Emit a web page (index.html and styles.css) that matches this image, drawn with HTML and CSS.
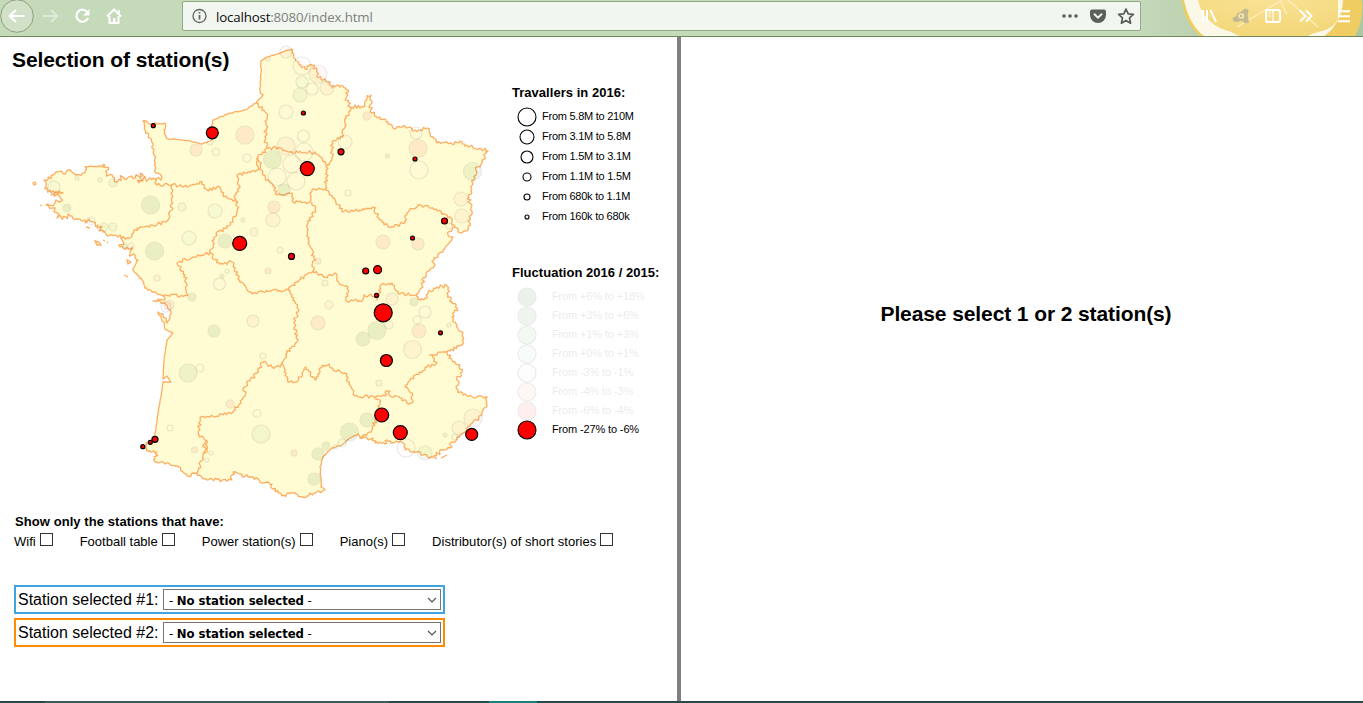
FILE: index.html
```html
<!DOCTYPE html>
<html lang="en">
<head>
<meta charset="utf-8">
<title>Stations</title>
<link rel="stylesheet" href="styles.css">
</head>
<body>
<header class="toolbar">
  <svg class="nav-icons" width="182" height="36" viewBox="0 0 182 36">
    <circle cx="17" cy="16" r="16.3" fill="#d0e1c7" stroke="#8d9f83"/>
    <path d="M24.500 16H10M16 10l-6.300 6 6.300 6" class="ic ic-thick"/>
    <path d="M43 16h14M51 10l6.300 6-6.300 6" class="ic ic-dim"/>
    <path d="M87.500 12.500A6 6 0 1 0 88 18" class="ic ic-thick"/>
    <path d="M89.500 9v6.500H83z" fill="#fff"/>
    <path d="M107 16.500L114 9.500l7 7M119 10v4" class="ic"/>
    <path d="M109.500 16v7h9v-7" class="ic"/>
    <path d="M113 18h2.500v5H113z" fill="#fff"/>
  </svg>
  <div class="urlbar">
    <svg width="16" height="16" viewBox="0 0 16 16"><circle cx="7.500" cy="8" r="6.500" fill="none" stroke="#5f635d" stroke-width="1.300"/><path d="M7.500 7v4.500M7.500 4v1.600" stroke="#5f635d" stroke-width="1.700"/></svg>
    <span class="url"><b>localhost</b>:8080/index.html</span>
    <svg class="url-actions" width="76" height="20" viewBox="0 0 76 20">
      <g fill="#5b5f59"><circle cx="5" cy="10" r="1.800"/><circle cx="11" cy="10" r="1.800"/><circle cx="17" cy="10" r="1.800"/>
      <path d="M33 3.500h12q2 0 2 2V9a8 8 0 0 1-16 0V5.500q0-2 2-2z"/></g>
      <path d="M35.500 8.200l3.500 3.400 3.500-3.400" fill="none" stroke="#f1f6f0" stroke-width="2" stroke-linecap="round"/>
      <path d="M67 3l2.200 4.800 5.200.5-3.900 3.600 1.100 5.300L67 14.500l-4.600 2.700 1.100-5.300-3.900-3.600 5.200-.5z" fill="none" stroke="#5b5f59" stroke-width="1.700" stroke-linejoin="round"/>
    </svg>
  </div>
  <svg class="theme" width="222" height="36" viewBox="1141 0 222 36">
    <defs>
      <linearGradient id="bg"><stop offset="0" stop-color="#c4d9b9"/><stop offset=".2" stop-color="#bdd3b2"/><stop offset="1" stop-color="#a9c8a4"/></linearGradient>
      <radialGradient id="pulp" cx=".5" cy="0" r=".9"><stop offset="0" stop-color="#f8e294"/><stop offset="1" stop-color="#f4d77a"/></radialGradient>
    </defs>
    <rect x="1141" width="222" height="36" fill="url(#bg)"/>
    <path d="M1182 0C1183 14 1190 28 1200 36H1355C1361 26 1363 12 1362 0z" fill="#f0cd62"/>
    <path d="M1184 0C1187 14 1193 28 1204 36H1324C1334 30 1343 15 1343 0z" fill="#fbf8e8"/>
    <path d="M1198 0C1200 12 1210 25 1225 30C1234 32 1237 36 1240 36H1308C1318 30 1332 32 1338 19L1338 0z" fill="url(#pulp)"/>
    <path d="M1282 0L1237 27M1280 0l7 14M1288 0l30 27" stroke="#fcf0c4" stroke-width="1.500" fill="none" opacity=".8"/>
    <path d="M1203 10v12M1207 10v12M1210.500 10l5.500 12" class="ic"/>
    <path d="M1241 12l4-3.500 3.500 1-1 6 1.500 7-3.500 1-4-3-4 1.500-4-.5-1-3.500 4-2 1-3z" fill="#c3b88f"/>
    <circle cx="1241" cy="16" r="2" fill="none" stroke="#f6e7b1" stroke-width="1.500"/><path d="M1243.500 13.500v5" stroke="#f6e7b1"/>
    <rect x="1266" y="10" width="14" height="12" rx="2" class="ic"/><path d="M1273 10v12M1268 13h3M1268 16h3" class="ic ic-thin"/>
    <path d="M1300 10.500l5.500 5.500-5.500 5.500M1306 10.500l5.500 5.500-5.500 5.500" class="ic"/>
    <path d="M1338 11.200h12M1338 16.200h12M1338 21.200h12" class="ic"/>
  </svg>
</header>

<main class="page">
  <section class="left">
    <div class="overview">
      <div class="map-box">
        <h1 class="title">Selection of station(s)</h1>
        <svg id="map" width="502" height="465" viewBox="0 37 502 465"></svg>
      </div>
      <aside class="legends">
        <h2 class="legend-title">Travallers in 2016:</h2>
        <ul class="legend sizes">
          <li><svg width="30" height="20"><circle cx="15" cy="11" r="9"/></svg>From 5.8M to 210M</li>
          <li><svg width="30" height="20"><circle cx="15" cy="11" r="7"/></svg>From 3.1M to 5.8M</li>
          <li><svg width="30" height="20"><circle cx="15" cy="11" r="6"/></svg>From 1.5M to 3.1M</li>
          <li><svg width="30" height="20"><circle cx="15" cy="11" r="4"/></svg>From 1.1M to 1.5M</li>
          <li><svg width="30" height="20"><circle cx="15" cy="11" r="3"/></svg>From 680k to 1.1M</li>
          <li><svg width="30" height="20"><circle cx="15" cy="11" r="2"/></svg>From 160k to 680k</li>
        </ul>
        <h2 class="legend-title">Fluctuation 2016 / 2015:</h2>
        <ul class="legend colors">
          <li class="dim"><svg width="40" height="19"><circle class="g1" cx="15" cy="11" r="9"/></svg>From +6% to +18%</li>
          <li class="dim"><svg width="40" height="19"><circle class="g2" cx="15" cy="11" r="9"/></svg>From +3% to +6%</li>
          <li class="dim"><svg width="40" height="19"><circle class="g3" cx="15" cy="11" r="9"/></svg>From +1% to +3%</li>
          <li class="dim"><svg width="40" height="19"><circle class="g4" cx="15" cy="11" r="9"/></svg>From +0% to +1%</li>
          <li class="dim"><svg width="40" height="19"><circle class="p0" cx="15" cy="11" r="9"/></svg>From -3% to -1%</li>
          <li class="dim"><svg width="40" height="19"><circle class="p1" cx="15" cy="11" r="9"/></svg>From -4% to -3%</li>
          <li class="dim"><svg width="40" height="19"><circle class="p2" cx="15" cy="11" r="9"/></svg>From -6% to -4%</li>
          <li><svg width="40" height="19"><circle class="red" cx="15" cy="11" r="9"/></svg>From -27% to -6%</li>
        </ul>
      </aside>
    </div>

    <h2 class="filter-title">Show only the stations that have:</h2>
    <div class="filters">
      <label>Wifi<input type="checkbox"></label>
      <label>Football table<input type="checkbox"></label>
      <label>Power station(s)<input type="checkbox"></label>
      <label>Piano(s)<input type="checkbox"></label>
      <label class="wide">Distributor(s) of short stories<input type="checkbox"></label>
    </div>

    <div class="pickers">
      <div class="picker blue"><span class="picker-label">Station selected #1:</span>
        <div class="select"><span>- <b>No station selected</b> -</span><svg width="10" height="6"><path d="M1 1l4 4 4-4" fill="none" stroke="#555" stroke-width="1.200"/></svg></div></div>
      <div class="picker orange"><span class="picker-label">Station selected #2:</span>
        <div class="select"><span>- <b>No station selected</b> -</span><svg width="10" height="6"><path d="M1 1l4 4 4-4" fill="none" stroke="#555" stroke-width="1.200"/></svg></div></div>
    </div>
  </section>
  <section class="right"><p class="prompt">Please select 1 or 2 station(s)</p></section>
</main>
<footer class="taskbar"><i class="tb-a"></i><i class="tb-b"></i><i class="tb-c"></i><i class="tb-d"></i></footer>
<script src="map.js"></script>
</body>
</html>
```

FILE: styles.css
```css
* { box-sizing: border-box; }
html, body { height: 100%; }
body { margin: 0; display: flex; flex-direction: column; overflow: hidden; background: #fff; color: #000; font-family: "Liberation Sans", Arial, sans-serif; }
h1, h2, p, ul { margin: 0; padding: 0; }
svg { display: block; flex: none; }

.toolbar { display: flex; height: 37px; flex: none; background: #c5dab9; border-bottom: 1px solid #71885f; }
.ic { fill: none; stroke: #fff; stroke-width: 2; }
.ic-thick { stroke-width: 2.2; }
.ic-thin { stroke-width: 1.2; }
.ic-dim { stroke-width: 2; opacity: .45; }
.urlbar { display: flex; align-items: center; width: 959px; height: 30px; margin-top: 1px; padding: 0 5px 0 9px; background: #f1f6f0; border: 1px solid #93a888; border-radius: 2px; }
.url { margin-left: 8px; padding-top: 1px; font: 13.3px "Open Sans", sans-serif; color: #7d817b; letter-spacing: -.16px; }
.url b { font-weight: 400; color: #0c0c0d; }
.url-actions { margin-left: auto; }

.page { display: flex; flex: 1; min-height: 0; }
.left { width: 681px; flex: none; border-right: 4px solid #808080; }
.right { flex: 1; padding: 265px 0 0 8px; text-align: center; }
.prompt { font-size: 21px; line-height: 24px; font-weight: 700; letter-spacing: -.1px; }

.overview { display: flex; height: 474px; }
.map-box { position: relative; width: 512px; }
.title { position: absolute; left: 12px; top: 11px; font-size: 21px; line-height: 24px; letter-spacing: -.09px; }
.legend-title { font-size: 13px; line-height: 16px; letter-spacing: .03px; }
.legends { padding-top: 48px; }
.legend { list-style: none; font-size: 11px; letter-spacing: -.25px; }
.legend li { display: flex; align-items: center; white-space: nowrap; }
.legend svg { overflow: visible; }
.legend circle { stroke: #000; stroke-width: 1.1; fill: none; }
.sizes { margin: 5px 0 39px; }
.sizes li { height: 20px; }
.colors { margin-top: 5px; letter-spacing: -.14px; }
.colors li { height: 19px; }
.legend .dim { opacity: .08; }

.g1, .legend .g1 { fill: #05690f; }
.g2, .legend .g2 { fill: #378e2b; }
.g3, .legend .g3 { fill: #75c069; }
.g4, .legend .g4 { fill: #a7e6c0; }
.p0, .legend .p0 { fill: #ffe6f2; }
.p1, .legend .p1 { fill: #ff9b9b; }
.p2, .legend .p2 { fill: #ff3737; }
.red, .legend .red { fill: #f00; }

.land { fill: #fffbd2; stroke: none; }
.border { fill: none; stroke: #fdae61; stroke-width: 1.3; stroke-linejoin: round; }
.islet { fill: #fffbd2; stroke: #fdae61; stroke-width: 1.3; }
.station { stroke: #000; stroke-width: 1.2; }
.faint { opacity: .08; }

.filter-title { padding: 3px 0 0 15px; font-size: 13px; line-height: 16px; letter-spacing: .07px; }
.filters { display: flex; gap: 27px; padding: 3px 0 0 14px; font-size: 13px; line-height: 18px; }
.filters label { display: flex; align-items: flex-start; white-space: nowrap; }
.filters .wide { letter-spacing: .03px; }
.filters input { appearance: none; width: 13px; height: 13px; margin: 0 0 0 4px; border: 1px solid #333; background: #fff; }
.pickers { display: flex; flex-direction: column; gap: 4px; padding: 34px 0 0 14px; }
.picker { display: flex; align-items: center; width: 431px; height: 29px; padding: 0 2px; border: 2px solid; }
.blue { border-color: #40a4df; }
.orange { border-color: #ff8c00; }
.picker-label { width: 145px; font-size: 16px; white-space: nowrap; }
.select { display: flex; align-items: center; justify-content: space-between; width: 278px; height: 21px; padding: 1px 3px 0 5px; border: 1px solid #767676; font: 13px "DejaVu Sans Condensed", "DejaVu Sans", sans-serif; letter-spacing: -.05px; white-space: nowrap; }

.taskbar { display: flex; height: 2px; flex: none; background: #28494b; }
.tb-a { width: 45px; }
.tb-b { width: 344px; background: #3a5b5c; }
.tb-c { width: 100px; }
.tb-d { width: 48px; background: #1b807f; }
```

FILE: map.js
```js
// Coast and region borders: [roughness, "x,y x,y ..."]
var coast = [
  [.3, "212,140 211,128 213,120 230,113 245,110 256,103 263,95 260,93 261,73 261,61 267,57 277,54 285,51 292,49"],
  [1, "292,49 294,58 296,61 301,65 305,69 312,65 317,70 317,77 325,79 330,82 332,88 343,86 348,90 346,98 350,107 365,106 367,98 371,95 370,105 372,113 380,117 388,122 393,128 403,126 415,130 427,128 433,137 437,143 447,142 452,144 462,142 465,146 480,148 488,151 482,160 476,170 473,183 469,197 471,208 470,223 465,231 458,232 455,227 452,230 448,235 453,237 443,252 434,260 433,268 423,278 423,287 417,294 420,300 427,298 428,292 437,287 447,286 448,295 452,302 457,308 452,317 457,325 463,337 462,345 447,352 452,360 460,365 462,372 457,380 458,390 463,395 475,398 487,397 487,405 482,415 473,422 467,428 460,435 452,442 450,448 443,450 433,457 423,455 417,452 405,450 403,443 393,443 387,440 385,444 375,443 373,438 360,438"],
  [.3, "360,438 358,434 350,438 342,445 332,448 323,457 320,467 321,478 321,487 325,490"],
  [1, "325,490 317,492 302,497 293,493 282,496 273,489 272,484 262,483 258,479 248,477 233,472 232,480 207,480 197,473 187,476 180,467 155,462 157,452 150,451 143,447 150,442"],
  [.1, "150,442 155,435 158,413 162,390 163,382 171,382 167,376 163,379 164,360 167,340 173,333 165,329 164,322"],
  [.8, "164,322 158,312 163,314 167,323 170,318 170,310 163,303 153,301 165,299 163,296"],
  [.4, "163,296 145,288 142,280 133,270 138,260"],
  [1.5, "138,260 130,253 132,247 120,247 123,237 115,235 103,232 98,225 85,220 72,216 57,218 55,208 46,205 60,202 60,197 51,195 63,193 50,190 45,189 44,180 53,175 72,172 83,173 88,167 105,165 107,173 115,182 123,177 135,178 143,175 139,183 143,179 155,179 162,177"],
  [.7, "162,177 156,173 154,150 150,138 145,130 143,121 148,123 157,124 165,123 164,130 168,139"],
  [.2, "168,139 175,139 190,141 202,144 212,140"]
];
var inner = [
  "256,103 265,112 267,118 265,140 268,148",
  "268,148 280,148 290,152 303,153 315,152 322,158 327,165",
  "327,165 332,158 332,142 343,137 345,123 350,107",
  "327,165 327,177 325,189 312,190 310,202 293,202 292,193 277,195 273,185 263,175 258,157 268,148",
  "258,157 258,170 247,173 237,175 240,187 235,195 237,202",
  "155,179 157,185 172,185 187,187 202,182 207,190 220,187 223,195 238,202",
  "172,185 172,210 166,222 137,228 132,237 122,238",
  "238,202 237,213 227,228 216,233 210,253",
  "210,253 193,257 177,263 185,275 188,295 163,296",
  "210,253 220,264 232,262 240,282 252,294 270,291 288,290",
  "288,290 299,280 313,271",
  "313,271 314,258 308,243 308,223 315,210 312,202",
  "325,189 333,198 343,212 360,210 373,207 382,222 392,227 405,223 407,213 418,205 433,208 450,217 455,227",
  "313,271 325,277 335,273 339,283 348,287 346,301 363,300 364,295 376,296 377,300 382,284 392,283 400,294 417,294",
  "288,290 292,295 299,310 294,322 297,342 287,353 283,365",
  "283,365 272,367 263,362 257,373 244,387 245,396 233,412 210,417 200,418 199,435 207,443 205,453 197,473",
  "206,441 203,447 207,452 203,452",
  "283,365 288,382 298,381 306,367 315,380 320,368 329,364 333,370 345,373 353,390 355,396 376,397",
  "376,397 380,403 377,417 372,430 360,438",
  "376,397 385,396 386,391 390,391 390,396 397,396 407,403 413,402 412,393 405,387 415,375 427,367 437,363 430,355 447,352"
];
var islets = [
  "33,183 35,182 36,184 34,185", "40,205 42,206", "95,241 99,242 101,245 97,245", "103,240 105,241",
  "86,227 90,228", "127,260 131,262 128,264", "124,275 128,277", "434,457 437,459", "441,458 447,455", "107,242 108,243"
];
// x, y, radius, colour class
var stations = [
  "286,52,6,p1","268,59,2,p1","302,66,9,p0","318,74,9,p1","302,82,6,g4","312,89,6,p0","327,88,7,p1","300,95,7,g3","286,112,7,p0",
  "245,135,9,p2","196,150,6,p2","216,152,4,g4","210,142,3,p0","247,158,4,p0","303.5,136,6,p0","286,146,9,p1","304,152,9,p0","272.500,159.500,9,g1",
  "292,164,9,p0","277,177,9,p0","296,181,9,p0","284,190,6,g1","345,142,7,p0","348,193,3,p0","367,116,4,p2","274,207,6,p2","273,220,7,p1",
  "243,220,2,p2","254,232,4,p1","150.500,205,9,g1","182,207,4,g3","215,211,7,g4","189,238,7,g4","416,133,6,p0","418,148.500,9,p2","387.500,156,2,g1",
  "419,170,9,p0","472.5,171.500,9,g2","461,199,7,p1","462,216,7,p1","449,226,3,p0","383,242,7,p2","418,244,6,p2","318,261,3,p2",
  "54,187,6,g4","77,178,2,g3","100,180,2,g3","113,183,4,g3","140,177,4,g4","67,208,4,g1","91,221,4,g4","104,227,4,g3","113,227,4,g3",
  "125,246,2,g1","131,246,3,p0","154.500,251,9,g1","157,278,3,p1","169,305,5,p2","166,307,5,p0","192,297,4,g1","219.5,284,6,p0","222,276,2,g1",
  "227,271,2,p0","225,241,7,g1","214,331,6,g1","253,321,6,p1","263,356,3,p0","188,373,9,g2","200,368,4,p0","230,404,4,p2","257,413.500,4,p0",
  "261,434,9,g3","170,428,3,p0","194.500,450,3,p2","211,453,2,p0","207,460,2,p0","294,453,3,p2","318,454,6,g1","314,479,6,g1","325,283,3,p1",
  "329,305,4,p1","318,323,7,p2","392,299,6,p1","414,302,4,g1","425,312,6,p0","417,320,4,p0","389,325,4,p0","377,330.500,9,g1","363,339,7,g1",
  "419,331,7,p2","412.500,349.500,9,p1","449,325,2,g3","379,383,3,g3","367,420,7,g1","349.500,432,9,g1","326,446,4,g1","342,443,4,g4","335,447,2,g4",
  "406,448,9,p0","425,453,7,g3","445,435,2,p2","455,437,3,p0","459,428,7,p1","473,418,9,p1","280,250,3,g4","268,271,3,p2",
  "153.3,125.7,2,red","212.3,132.8,6,red","303.4,113,2,red","341,151.800,3,red","307.300,168.600,7,red","415,159,2,red","444.500,221,3,red",
  "412.500,238,2,red","365.700,271,3,red","377.600,269.700,4,red","239.700,243.400,7,red","291.500,256.400,3,red","376.500,295.400,2,red",
  "383.200,312.800,9,red","440.500,332.800,2,red","386.400,360.500,6,red","381.700,415,7,red","400.300,432.600,7,red","471.700,434.400,6,red",
  "155,439.300,3,red","150.300,442.300,2,red","142.800,446.700,2,red"
];

var seed = 7;
function rnd() { seed = (seed * 16807) % 2147483647; return seed / 2147483647 - .5; }

// Splits each segment into short steps and shifts them sideways for a ragged line
function rough(text, amount) {
  var pts = text.split(" ").map(function (p) { return p.split(",").map(Number); });
  var out = [pts[0]];
  for (var i = 1; i < pts.length; i++) {
    var a = pts[i - 1], b = pts[i], dx = b[0] - a[0], dy = b[1] - a[1];
    var len = Math.hypot(dx, dy), n = Math.max(1, Math.round(len / 1.7));
    for (var k = 1; k < n; k++) {
      var s = rnd() * 3.8 * amount;
      out.push([a[0] + dx * k / n - dy / len * s, a[1] + dy * k / n + dx / len * s]);
    }
    out.push(b);
  }
  return out.map(function (p) { return p[0].toFixed(1) + " " + p[1].toFixed(1); }).join("L");
}
function add(tag, attrs) {
  var el = document.createElementNS("http://www.w3.org/2000/svg", tag);
  for (var k in attrs) el.setAttribute(k, attrs[k]);
  document.getElementById("map").appendChild(el);
}
var outline = "M" + coast.map(function (c) { return rough(c[1], c[0]); }).join("L") + "Z";
add("path", { d: outline, "class": "land" });
add("path", { d: outline, "class": "border" });
inner.forEach(function (t) { add("path", { d: "M" + rough(t, .9), "class": "border" }); });
islets.forEach(function (t) { add("path", { d: "M" + t.replace(/ /g, "L") + "Z", "class": "islet" }); });
stations.forEach(function (t) {
  var s = t.split(",");
  add("circle", { cx: s[0], cy: s[1], r: s[2], "class": "station " + s[3] + (s[3] === "red" ? "" : " faint") });
});
```
